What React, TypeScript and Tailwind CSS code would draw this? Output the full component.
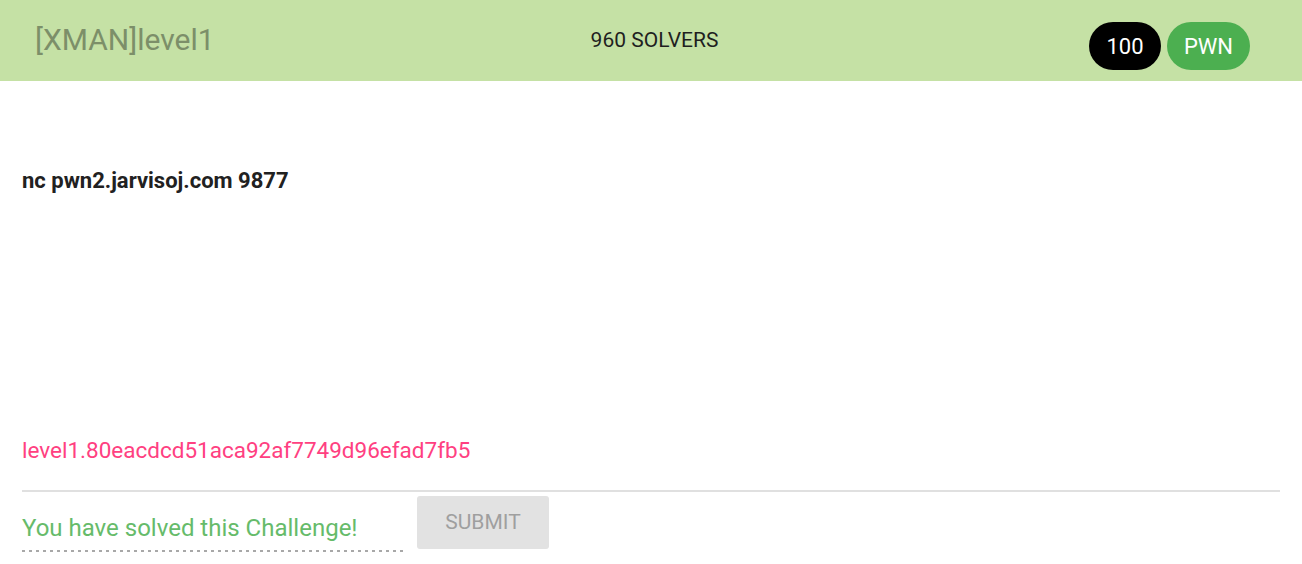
export default function App() {
  return (
    <div className="w-[1302px] h-[564px] bg-white overflow-hidden" style={{ fontFamily: "Roboto, 'Liberation Sans', sans-serif" }}>
      {/* header */}
      <div className="h-[81px] bg-[#c5e1a5] flex items-center pl-[35px] pr-[52px]">
        <div className="flex-1 text-[30px] text-[#7c8f69] leading-none pb-[2px]">[XMAN]level1</div>
        <div className="flex-1 text-center text-[21px] text-[#1f1f1f] pl-[24px]">960 SOLVERS</div>
        <div className="flex-1 flex justify-end gap-[6px] mt-[11px]">
          <span className="h-[48px] w-[72px] rounded-full bg-black text-white text-[22px] flex items-center justify-center">100</span>
          <span className="h-[48px] w-[83px] rounded-full bg-[#4caf50] text-white text-[22px] flex items-center justify-center">PWN</span>
        </div>
      </div>

      {/* body */}
      <div className="px-[22px]">
        <p className="mt-[85px] text-[22px] font-bold text-[#212121] leading-[30px]">nc pwn2.jarvisoj.com 9877</p>

        <p className="mt-[239px] text-[22.5px] text-[#ff4081] leading-[30px]">level1.80eacdcd51aca92af7749d96efad7fb5</p>

        <div className="mt-[25px] border-t-2 border-[#e0e0e0]" />

        <div className="flex items-start gap-[11px] mt-[4px]">
          <div className="w-[384px] h-[56px] flex items-end pb-[9px] bg-[repeating-linear-gradient(to_right,#a8a8a8_0_3px,transparent_3px_7px)] bg-[length:100%_2px] bg-bottom bg-no-repeat">
            <span className="text-[24px] text-[#66bb6a] leading-[30px]">You have solved this Challenge!</span>
          </div>
          <button className="w-[132px] h-[53px] rounded-[3px] bg-[#e2e2e2] text-[#9f9f9f] text-[21px] uppercase">Submit</button>
        </div>
      </div>
    </div>
  );
}
